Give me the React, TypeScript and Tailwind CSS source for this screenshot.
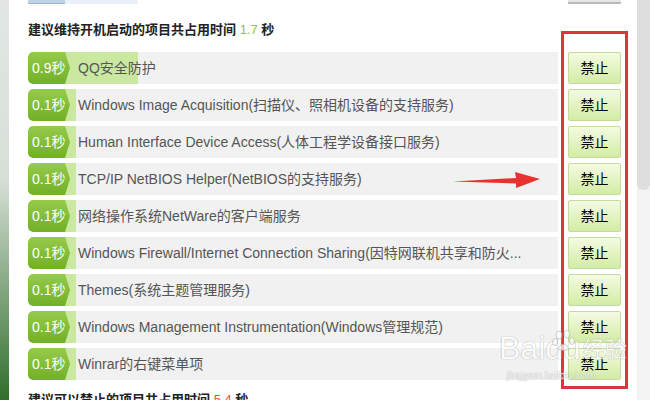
import React from "react";

const ROWS = [
  { t: 0.9, name: "QQ安全防护" },
  { t: 0.1, name: "Windows Image Acquisition(扫描仪、照相机设备的支持服务)" },
  { t: 0.1, name: "Human Interface Device Access(人体工程学设备接口服务)" },
  { t: 0.1, name: "TCP/IP NetBIOS Helper(NetBIOS的支持服务)" },
  { t: 0.1, name: "网络操作系统NetWare的客户端服务" },
  { t: 0.1, name: "Windows Firewall/Internet Connection Sharing(因特网联机共享和防火..." },
  { t: 0.1, name: "Themes(系统主题管理服务)" },
  { t: 0.1, name: "Windows Management Instrumentation(Windows管理规范)" },
  { t: 0.1, name: "Winrar的右键菜单项" },
];

const FONT = "[font-family:'Liberation_Sans','Noto_Sans_CJK_SC',sans-serif]";

function Row({ t, name }: { t: number; name: string }) {
  // 进度条宽度随耗时变化
  const barWidth = 40 + t * 78;
  return (
    <div className="flex items-center h-[32px] mb-[5px]">
      <div className="relative flex items-center w-[530px] h-full bg-[#f1f1f1] rounded-l-[5px] overflow-hidden">
        <div className="absolute left-0 inset-y-0 bg-[#cbe8a0] rounded-l-[5px]" style={{ width: barWidth }} />
        <div className="relative flex items-center w-[42px] h-full pl-[4px] text-[14px] text-white rounded-l-[5px] bg-gradient-to-b from-[#95cb4a] to-[#72b026] [clip-path:polygon(0_0,37px_0,42px_50%,37px_100%,0_100%)]">
          {t}秒
        </div>
        <span className="relative ml-[8px] text-[14px] text-[#555] whitespace-nowrap">{name}</span>
      </div>
      <button className="ml-[10px] w-[53px] h-full text-[14px] text-black rounded-[2px] border border-[#c2dc9a] bg-gradient-to-b from-[#f4fbe2] to-[#d3eca4]">
        禁止
      </button>
    </div>
  );
}

export default function App() {
  return (
    <div className={`flex w-[650px] h-[400px] overflow-hidden bg-white ${FONT}`}>
      {/* 左侧桌面背景 */}
      <div className="w-[9px] h-full bg-gradient-to-b from-[#e2e7e5] via-[#d6e0d6] via-45% to-[#2f6f2b]" />

      <div className="relative flex-1 pl-[19px] bg-white">
        {/* 上一行的残留 */}
        <div className="flex h-[4px] overflow-hidden">
          <div className="w-[37px] bg-[#bfd3e8] border-b border-[#9fb8d2]" />
          <div className="w-[73px] bg-[#e9f0f7]" />
          <div className="ml-[430px] w-[53px] bg-[#e6e6e6] border-b-2 border-[#b9b9b9]" />
        </div>

        <div className="pt-[16px] pb-[12px] h-[48px] leading-[20px] text-[13px] font-bold text-[#222]">
          建议维持开机启动的项目共占用时间 <span className="font-normal text-[#8dc63f]">1.7</span> 秒
        </div>

        {ROWS.map((r, i) => (
          <Row key={i} t={r.t} name={r.name} />
        ))}

        <div className="mt-[10px] leading-[20px] text-[13px] font-bold text-[#222]">
          建议可以禁止的项目共占用时间 <span className="font-normal text-[#e8572f]">5.4</span> 秒
        </div>

        {/* 标注框 */}
        <div className="absolute left-[552px] top-[31px] w-[67px] h-[358px] border-[3px] border-[#dc3540]" />

        {/* 红色箭头 */}
        <svg className="absolute left-[443px] top-[170px]" width="90" height="20" viewBox="0 0 90 20">
          <path d="M1 11.5 L64 8 L63 2 L88 9 L64 18 L64 13.5 Z" fill="#e8322f" />
        </svg>

        {/* 水印 */}
        <div className="absolute left-[490px] top-[332px] flex flex-col items-start pointer-events-none opacity-70">
          <div className="flex items-end leading-none">
            <span className="text-[32px] text-white [text-shadow:0_0_1px_#999,0_0_1px_#999] [font-family:'Liberation_Sans',sans-serif]">Bai</span>
            <span className="text-[32px] text-white [text-shadow:0_0_1px_#999,0_0_1px_#999] [font-family:'Liberation_Sans',sans-serif]">du</span>
            <span className="ml-[2px] mb-[3px] text-[22px] text-white [text-shadow:0_0_1px_#999,0_0_1px_#999]">经验</span>
          </div>
          <span className="mt-[3px] ml-[8px] text-[11px] text-white [text-shadow:0_0_1px_#999,0_0_1px_#999]">jingyan.baidu.com</span>
        </div>
        <svg className="absolute left-[542px] top-[330px] opacity-70" width="30" height="22" viewBox="0 0 30 22">
          <g fill="white" stroke="#aaa" strokeWidth="0.8">
            <ellipse cx="8" cy="5" rx="3" ry="4" />
            <ellipse cx="16" cy="4" rx="3" ry="4" />
            <ellipse cx="4" cy="12" rx="2.5" ry="3.5" />
            <ellipse cx="21" cy="11" rx="2.5" ry="3.5" />
            <path d="M7 19 Q12 9 18 19 Q12 22 7 19 Z" />
          </g>
        </svg>
      </div>

      {/* 滚动条 */}
      <div className="w-[13px] h-full bg-[#f3f3f3] flex flex-col">
        <div className="h-[190px] bg-[#dedede] rounded-b-[6px]" />
      </div>
    </div>
  );
}
